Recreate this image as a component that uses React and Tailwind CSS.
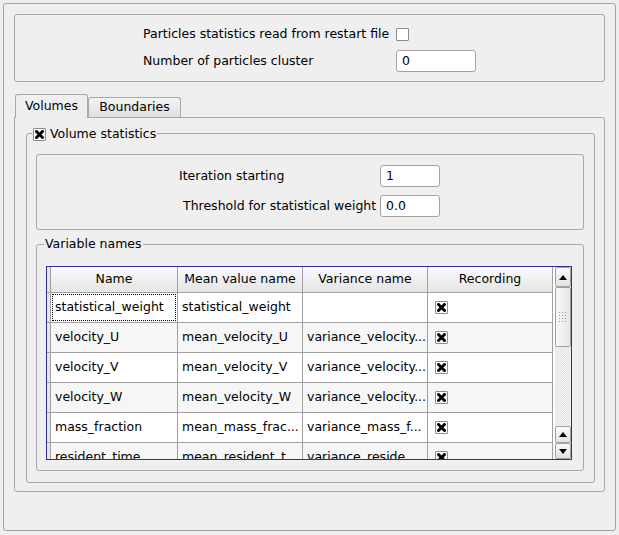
import React from "react";

const rows = [
  ["statistical_weight", "statistical_weight", ""],
  ["velocity_U", "mean_velocity_U", "variance_velocity..."],
  ["velocity_V", "mean_velocity_V", "variance_velocity..."],
  ["velocity_W", "mean_velocity_W", "variance_velocity..."],
  ["mass_fraction", "mean_mass_frac...", "variance_mass_f..."],
  ["resident_time", "mean_resident_t...", "variance_reside..."],
];

const colWidths = ["w-[127px]", "w-[125px]", "w-[125px]", "w-[125px]"];

const XMark = () => (
  <svg width="9" height="9" viewBox="0 0 9 9">
    <path d="M1.5 1.5 L7.5 7.5 M7.5 1.5 L1.5 7.5" stroke="#000" strokeWidth="2.9" strokeLinecap="square" />
  </svg>
);

const CheckBox = ({ checked }) => (
  <div className="w-[13px] h-[13px] shrink-0 border border-[#8c8c8c] bg-white rounded-[1px] flex items-center justify-center">
    {checked && <XMark />}
  </div>
);

const Arrow = ({ up }) => (
  <svg width="8" height="5" viewBox="0 0 8 5">
    <path d={up ? "M0 5 L4 0 L8 5 Z" : "M0 0 L8 0 L4 5 Z"} fill="#000" />
  </svg>
);

const Grip = () => (
  <svg width="10" height="12" viewBox="0 0 10 12">
    {[0, 1, 2, 3].map((r) =>
      [0, 1, 2].map((c) => (
        <rect key={`${r}-${c}`} x={c * 3 + 1} y={r * 3 + 1} width="1" height="1" fill="#9a9a9a" />
      ))
    )}
  </svg>
);

const TextBox = ({ value, width }) => (
  <div className={`${width} h-[22px] border border-[#a2a2a2] rounded-[3px] bg-white flex items-center pl-[5px]`}>
    {value}
  </div>
);

const ScrollButton = ({ up, height }) => (
  <div className={`${height} border border-[#a0a0a0] rounded-[2px] bg-gradient-to-b from-[#fafafa] to-[#e2e2e2] flex items-center justify-center`}>
    <Arrow up={up} />
  </div>
);

export default function App() {
  return (
    <div className="w-[619px] h-[535px] bg-[#efefef] pt-[3px] pl-[3px] text-[12.5px] text-black font-['DejaVu_Sans',sans-serif]">
      <div className="w-[613px] h-[528px] border border-[#a3a3a3] rounded-[3px] pt-[10px] pl-[10px]">
        {/* top options */}
        <div className="w-[591px] h-[68px] border border-[#a8a8a8] rounded-[3px] pt-[8px] flex flex-col gap-[5px]">
          <div className="flex items-center h-[22px]">
            <div className="pl-[128px] w-[381px]">Particles statistics read from restart file</div>
            <CheckBox />
          </div>
          <div className="flex items-center h-[22px]">
            <div className="pl-[128px] w-[381px]">Number of particles cluster</div>
            <TextBox value="0" width="w-[80px]" />
          </div>
        </div>

        {/* tabs */}
        <div className="mt-[12px] h-[23px] flex items-end pl-[1px]">
          <div className="relative z-10 -mb-px w-[73px] h-[24px] border border-b-0 border-[#a8a8a8] rounded-t-[3px] bg-[#efefef] flex items-center justify-center">
            Volumes
          </div>
          <div className="w-[93px] h-[20px] border border-b-0 border-[#a8a8a8] rounded-t-[3px] bg-gradient-to-b from-[#f4f4f4] to-[#e0e0e0] flex items-center justify-center">
            Boundaries
          </div>
        </div>
        <div className="w-[591px] h-[375px] border border-[#a8a8a8] rounded-b-[3px] rounded-tr-[3px] pl-[11px] pt-[15px]">
          <div className="w-[569px] h-[350px] border border-[#a8a8a8] rounded-[3px]">
            <div className="-mt-[7px] ml-[5px] w-fit px-[1px] h-[14px] bg-[#efefef] flex items-center gap-[4px]">
              <CheckBox checked />
              <span>Volume statistics</span>
            </div>

            <div className="ml-[9px] mt-[13px] w-[548px] h-[76px] border border-[#a8a8a8] rounded-[3px] pt-[10px] flex flex-col gap-[8px]">
              <div className="flex items-center h-[22px]">
                <div className="pl-[142px] w-[343px]">Iteration starting</div>
                <TextBox value="1" width="w-[60px]" />
              </div>
              <div className="flex items-center h-[22px]">
                <div className="pl-[146px] w-[343px]">Threshold for statistical weight</div>
                <TextBox value="0.0" width="w-[60px]" />
              </div>
            </div>

            <div className="ml-[9px] mt-[14px] w-[548px] h-[227px] border border-[#a8a8a8] rounded-[3px]">
              <div className="-mt-[8px] ml-[7px] w-fit px-[1px] h-[14px] bg-[#efefef] flex items-center">
                Variable names
              </div>
              <div className="ml-[9px] mt-[15px] w-[526px] h-[194px] border border-[#2e3190] bg-white flex overflow-hidden">
                <div className="w-[507px] flex flex-col">
                  <div className="flex h-[26px] shrink-0">
                    <div className="w-[4px] border-r border-b border-[#a0a0a0] bg-[#e6e6e6]" />
                    {["Name", "Mean value name", "Variance name", "Recording"].map((h, i) => (
                      <div
                        key={h}
                        className={`${colWidths[i]} border-r border-b border-[#a0a0a0] bg-gradient-to-b from-[#fbfbfb] to-[#e4e4e4] flex items-center justify-center`}
                      >
                        {h}
                      </div>
                    ))}
                  </div>
                  {rows.map((r, idx) => (
                    <div key={r[0]} className={`flex h-[30px] shrink-0 ${idx % 2 ? "bg-[#f6f6f6]" : "bg-white"}`}>
                      <div className="w-[4px] border-r border-b border-[#a0a0a0] bg-[#e6e6e6]" />
                      {r.map((c, i) =>
                        idx === 0 && i === 0 ? (
                          <div key={i} className={`${colWidths[i]} border-r border-b border-[#a0a0a0] p-[1px]`}>
                            <div className="w-full h-full border border-dotted border-black flex items-center pl-[2px]">{c}</div>
                          </div>
                        ) : (
                          <div key={i} className={`${colWidths[i]} border-r border-b border-[#a0a0a0] flex items-center pl-[4px] whitespace-nowrap`}>
                            {c}
                          </div>
                        )
                      )}
                      <div className={`${colWidths[3]} border-r border-b border-[#a0a0a0] flex items-center pl-[7px]`}>
                        <CheckBox checked />
                      </div>
                    </div>
                  ))}
                </div>
                {/* scrollbar */}
                <div className="w-[16px] ml-[1px] flex flex-col bg-[#efefef]">
                  <ScrollButton up height="h-[20px]" />
                  <div className="h-[60px] border border-[#a0a0a0] rounded-[2px] bg-gradient-to-r from-[#f8f8f8] to-[#e6e6e6] flex items-center justify-center">
                    <Grip />
                  </div>
                  <div className="flex-1 bg-[repeating-conic-gradient(#e2e2e2_0%_25%,#f6f6f6_0%_50%)] bg-[length:2px_2px]" />
                  <ScrollButton up height="h-[17px]" />
                  <ScrollButton height="h-[16px]" />
                </div>
              </div>
            </div>
          </div>
        </div>
      </div>
    </div>
  );
}
